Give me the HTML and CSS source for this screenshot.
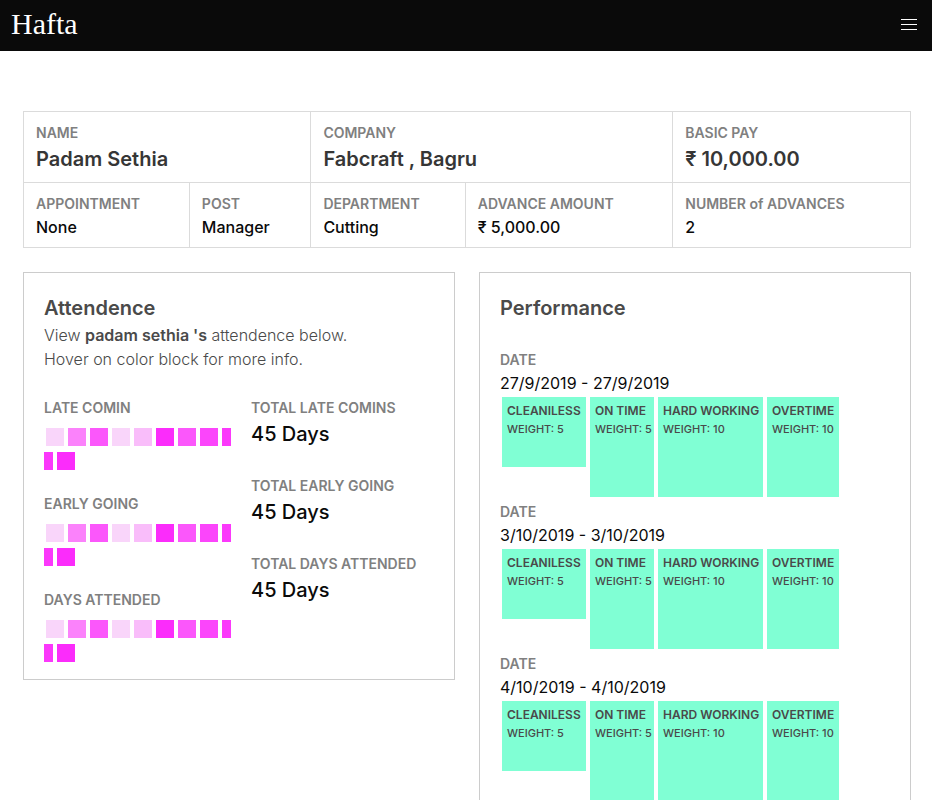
FILE: index.html
```html
<!DOCTYPE html>
<html lang="en">
<head>
<meta charset="utf-8">
<meta name="viewport" content="width=device-width, initial-scale=1">
<title>Hafta</title>
<link rel="stylesheet" href="styles.css">
</head>
<body>
<header class="navbar">
  <a class="brand" href="#">Hafta</a>
  <button class="burger" type="button" aria-label="Menu"><span></span><span></span><span></span></button>
</header>
<main class="page">
  <table class="summary">
    <colgroup><col class="c-appointment"><col class="c-post"><col class="c-department"><col class="c-advance"><col class="c-count"></colgroup>
    <tbody>
      <tr>
        <td colspan="2"><p class="label">NAME</p><p class="lead">Padam Sethia</p></td>
        <td colspan="2"><p class="label">COMPANY</p><p class="lead">Fabcraft , Bagru</p></td>
        <td><p class="label">BASIC PAY</p><p class="lead">₹ 10,000.00</p></td>
      </tr>
      <tr>
        <td><p class="label">APPOINTMENT</p><p class="value">None</p></td>
        <td><p class="label">POST</p><p class="value">Manager</p></td>
        <td><p class="label">DEPARTMENT</p><p class="value">Cutting</p></td>
        <td><p class="label">ADVANCE AMOUNT</p><p class="value">₹ 5,000.00</p></td>
        <td><p class="label">NUMBER of ADVANCES</p><p class="value">2</p></td>
      </tr>
    </tbody>
  </table>
  <div class="cards">
    <section class="card">
      <h2 class="title">Attendence</h2>
      <p class="intro">View <strong>padam sethia 's</strong> attendence below.<br>Hover on color block for more info.</p>
      <div class="attendance">
        <div class="stack">
          <div>
            <p class="label">LATE COMIN</p>
            <div class="heat"><i class="l1"></i><i class="l3"></i><i class="l4"></i><i class="l1"></i><i class="l2"></i><i class="l7"></i><i class="l4"></i><i class="l5"></i><i class="l6 start"></i><i class="l6 end"></i><i class="l7"></i></div>
          </div>
          <div>
            <p class="label">EARLY GOING</p>
            <div class="heat"><i class="l1"></i><i class="l3"></i><i class="l4"></i><i class="l1"></i><i class="l2"></i><i class="l7"></i><i class="l4"></i><i class="l5"></i><i class="l6 start"></i><i class="l6 end"></i><i class="l7"></i></div>
          </div>
          <div>
            <p class="label">DAYS ATTENDED</p>
            <div class="heat"><i class="l1"></i><i class="l3"></i><i class="l4"></i><i class="l1"></i><i class="l2"></i><i class="l7"></i><i class="l4"></i><i class="l5"></i><i class="l6 start"></i><i class="l6 end"></i><i class="l7"></i></div>
          </div>
        </div>
        <div class="stack">
          <div><p class="label">TOTAL LATE COMINS</p><p class="total">45 Days</p></div>
          <div><p class="label">TOTAL EARLY GOING</p><p class="total">45 Days</p></div>
          <div><p class="label">TOTAL DAYS ATTENDED</p><p class="total">45 Days</p></div>
        </div>
      </div>
    </section>
    <section class="card">
      <h2 class="title">Performance</h2>
      <div class="periods">
        <article>
          <p class="label">DATE</p>
          <p class="date">27/9/2019 - 27/9/2019</p>
          <div class="scores">
            <div class="score low"><p>CLEANILESS</p><p class="weight">WEIGHT: 5</p></div>
            <div class="score"><p>ON TIME</p><p class="weight">WEIGHT: 5</p></div>
            <div class="score"><p>HARD WORKING</p><p class="weight">WEIGHT: 10</p></div>
            <div class="score"><p>OVERTIME</p><p class="weight">WEIGHT: 10</p></div>
          </div>
        </article>
        <article>
          <p class="label">DATE</p>
          <p class="date">3/10/2019 - 3/10/2019</p>
          <div class="scores">
            <div class="score low"><p>CLEANILESS</p><p class="weight">WEIGHT: 5</p></div>
            <div class="score"><p>ON TIME</p><p class="weight">WEIGHT: 5</p></div>
            <div class="score"><p>HARD WORKING</p><p class="weight">WEIGHT: 10</p></div>
            <div class="score"><p>OVERTIME</p><p class="weight">WEIGHT: 10</p></div>
          </div>
        </article>
        <article>
          <p class="label">DATE</p>
          <p class="date">4/10/2019 - 4/10/2019</p>
          <div class="scores">
            <div class="score low"><p>CLEANILESS</p><p class="weight">WEIGHT: 5</p></div>
            <div class="score"><p>ON TIME</p><p class="weight">WEIGHT: 5</p></div>
            <div class="score"><p>HARD WORKING</p><p class="weight">WEIGHT: 10</p></div>
            <div class="score"><p>OVERTIME</p><p class="weight">WEIGHT: 10</p></div>
          </div>
        </article>
      </div>
    </section>
  </div>
</main>
</body>
</html>
```
FILE: styles.css
```css
* { box-sizing: border-box; }
body {
  margin: 0;
  background: #fff;
  color: #0a0a0a;
  font: 400 16px/24px Inter, sans-serif;
}
p, h2 { margin: 0; }

.navbar {
  display: flex;
  align-items: center;
  justify-content: space-between;
  height: 51px;
  padding: 0 15px 3px 11px;
  background: #0a0a0a;
}
.brand {
  color: #fff;
  font: 400 30px/40px "Liberation Serif", serif;
  text-decoration: none;
}
.burger {
  display: flex;
  flex-direction: column;
  gap: 4px;
  width: 16px;
  padding: 0;
  border: 0;
  background: none;
}
.burger span { height: 1px; background: #fff; }

.page { padding: 60px 21px 24px 23px; }

.summary {
  width: 100%;
  border-collapse: collapse;
  table-layout: fixed;
}
.summary td {
  padding: 8px 12px;
  border: 1px solid #dbdbdb;
  vertical-align: top;
}
.c-appointment { width: 18.7%; }
.c-post { width: 13.7%; }
.c-department { width: 17.4%; }
.c-advance { width: 23.4%; }
.c-count { width: 26.8%; }

.label {
  padding-top: 2px;
  color: #808080;
  font-size: 14px;
  font-weight: 600;
  line-height: 22px;
}
.lead { color: #363636; font-size: 20px; font-weight: 600; line-height: 30px; }
.value { font-weight: 500; }

.cards {
  display: grid;
  grid-template-columns: repeat(auto-fit, minmax(400px, 1fr));
  gap: 24px;
  align-items: start;
  margin-top: 24px;
}
.card { padding: 20px; border: 1px solid #ccc; }
.title { color: #4a4a4a; font-size: 20px; font-weight: 600; line-height: 30px; }
.intro { color: #4a4a4a; font-weight: 300; }
.intro strong { font-weight: 600; }

.attendance {
  display: grid;
  grid-template-columns: repeat(2, minmax(0, 1fr));
  gap: 24px;
  align-items: start;
  margin-top: 24px;
}
.stack { display: grid; grid-template-columns: minmax(0, 1fr); gap: 24px; }
.total { font-size: 20px; font-weight: 500; line-height: 30px; }

.heat {
  display: flex;
  flex-wrap: wrap;
  margin: 0 -8px -6px 0;
  padding-top: 6px;
}
.heat i { width: 18px; height: 18px; margin: 3px 2px; }
/* A block that splits over two lines */
.heat .start { width: 9px; margin-right: 0; }
.heat .end { width: 9px; margin-left: 0; }
.l1 { background: #f9d5fa; }
.l2 { background: #f9bdfa; }
.l3 { background: #fb82fb; }
.l4 { background: #fb57fb; }
.l5 { background: #fb45fb; }
.l6 { background: #fb38fb; }
.l7 { background: #fb2cfb; }

.periods { margin-top: 24px; }
.scores {
  display: grid;
  grid-template-columns: 84px 64px 105px 72px;
  align-items: start;
  gap: 4px;
  padding: 2px;
}
.score {
  height: 100px;
  padding: 5px;
  background: #80ffd4;
  color: #4a4a4a;
  font-size: 12px;
  font-weight: 600;
  line-height: 18px;
  white-space: nowrap;
}
.score.low { height: 70px; }
.weight { font-size: 11px; font-weight: 500; }
```
